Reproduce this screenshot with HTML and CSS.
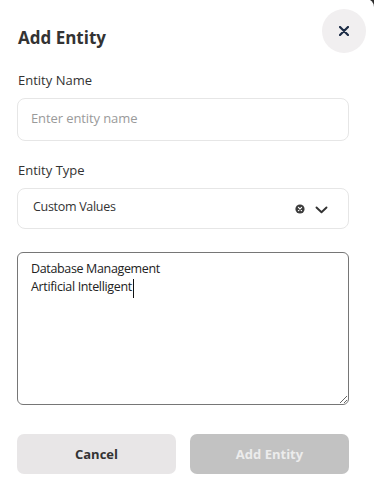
FILE: index.html
```html
<!DOCTYPE html>
<html>
<head>
<meta charset="utf-8">
<link rel="stylesheet" href="styles.css">
</head>
<body>
<div class="modal">
  <div class="header">
    <h1 class="title">Add Entity</h1>
    <button class="close" aria-label="Close">
      <svg width="10" height="10" viewBox="0 0 10 10"><path d="M1 1L9 9M9 1L1 9" stroke="#1c2b45" stroke-width="2.2" stroke-linecap="round"/></svg>
    </button>
  </div>
  <label class="label">Entity Name</label>
  <div class="input"><span class="placeholder">Enter entity name</span></div>
  <label class="label label-type">Entity Type</label>
  <div class="select">
    <span class="select-value">Custom Values</span>
    <span class="select-icons">
      <svg class="clear" width="10" height="10" viewBox="0 0 10 10"><circle cx="5" cy="5" r="4.6" fill="#3d3d3d"/><path d="M3.4 3.4L6.6 6.6M6.6 3.4L3.4 6.6" stroke="#fff" stroke-width="1.1" stroke-linecap="round"/></svg>
      <svg class="chev" width="13" height="8" viewBox="0 0 13 8"><path d="M1.5 1.5L6.5 6.3L11.5 1.5" fill="none" stroke="#333" stroke-width="1.9" stroke-linecap="round" stroke-linejoin="round"/></svg>
    </span>
  </div>
  <div class="area-wrap">
    <textarea class="area">Database Management
Artificial Intelligent</textarea>
    <span class="caret"></span>
  </div>
  <div class="actions">
    <button class="btn btn-cancel">Cancel</button>
    <button class="btn btn-add">Add Entity</button>
  </div>
</div>
</body>
</html>
```
FILE: styles.css
```css
html, body {
  margin: 0;
  padding: 0;
  background: #2b2b2b;
}
body {
  width: 374px;
  height: 493px;
  overflow: hidden;
}
.modal {
  box-sizing: border-box;
  width: 374px;
  height: 495px;
  margin-top: -1px;
  background: #fff;
  border-top-right-radius: 8px;
  padding: 10px 25px 0 17px;
  display: flex;
  flex-direction: column;
  font-family: "Open Sans", sans-serif;
  color: #333;
}
.header {
  display: flex;
  justify-content: space-between;
  align-items: flex-start;
  margin-right: -18px;
}
.title {
  margin: 17px 0 0 1px;
  font-size: 17px;
  line-height: 24px;
  font-weight: 700;
  color: #333;
}
.close {
  width: 44px;
  height: 44px;
  border-radius: 50%;
  border: none;
  background: #f1eff0;
  display: flex;
  align-items: center;
  justify-content: center;
  padding: 0;
  margin-right: 1px;
}
.label {
  display: block;
  font-size: 13px;
  line-height: 18px;
  margin: 18px 0 9px 1px;
  color: #333;
}
.label-type {
  margin-top: 20px;
}
.input {
  box-sizing: border-box;
  height: 43px;
  border: 1px solid #e6e6e6;
  border-radius: 8px;
  display: flex;
  align-items: center;
  padding-left: 13px;
}
.placeholder {
  font-size: 13px;
  color: #9a9a9a;
  letter-spacing: -0.1px;
  margin-top: -3px;
}
.select {
  box-sizing: border-box;
  height: 41px;
  border: 1px solid #e6e6e6;
  border-radius: 8px;
  display: flex;
  align-items: center;
  justify-content: space-between;
  padding: 0 20px 0 15px;
}
.select-value {
  font-size: 12.5px;
  margin-top: -5px;
  letter-spacing: -0.3px;
  color: #333;
}
.select-icons {
  display: flex;
  align-items: center;
  gap: 10px;
  margin-top: 1px;
}
.chev {
  margin-top: 1px;
}
.area-wrap {
  position: relative;
  margin-top: 23px;
}
.area {
  display: block;
  box-sizing: border-box;
  width: 332px;
  height: 153px;
  margin: 0;
  border: 1px solid #767676;
  border-radius: 6px;
  padding: 7px 13px;
  font-family: "Open Sans", sans-serif;
  font-size: 12.5px;
  line-height: 18px;
  letter-spacing: -0.35px;
  color: #222;
  outline: none;
  background: #fff;
}
.caret {
  position: absolute;
  left: 116px;
  top: 27px;
  width: 1px;
  height: 19px;
  background: #111;
}
.actions {
  display: flex;
  gap: 14px;
  margin-top: 29px;
}
.btn {
  flex: 1;
  height: 40px;
  border: none;
  border-radius: 7px;
  font-family: "Open Sans", sans-serif;
  font-size: 13px;
  font-weight: 700;
}
.btn-cancel {
  background: #e8e6e7;
  color: #333;
}
.btn-add {
  background: #c2c2c2;
  color: #ececec;
}
```
